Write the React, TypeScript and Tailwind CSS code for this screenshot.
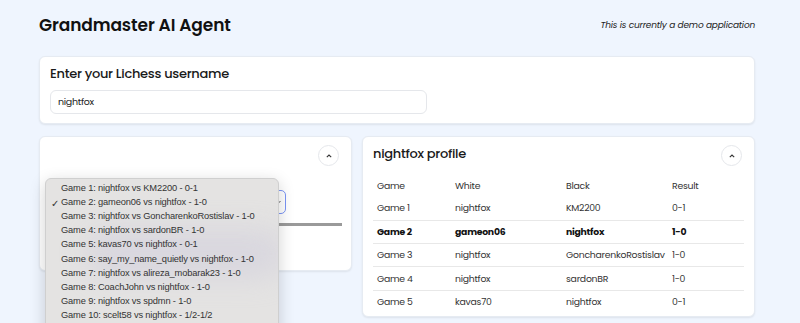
import React from "react";

const font = { fontFamily: "Poppins, 'Open Sans', 'Noto Sans', sans-serif" };

const games = [
  ["Game 1", "nightfox", "KM2200", "0-1"],
  ["Game 2", "gameon06", "nightfox", "1-0"],
  ["Game 3", "nightfox", "GoncharenkoRostislav", "1-0"],
  ["Game 4", "nightfox", "sardonBR", "1-0"],
  ["Game 5", "kavas70", "nightfox", "0-1"],
];

const menu = [
  "Game 1: nightfox vs KM2200 - 0-1",
  "Game 2: gameon06 vs nightfox - 1-0",
  "Game 3: nightfox vs GoncharenkoRostislav - 1-0",
  "Game 4: nightfox vs sardonBR - 1-0",
  "Game 5: kavas70 vs nightfox - 0-1",
  "Game 6: say_my_name_quietly vs nightfox - 1-0",
  "Game 7: nightfox vs alireza_mobarak23 - 1-0",
  "Game 8: CoachJohn vs nightfox - 1-0",
  "Game 9: nightfox vs spdmn - 1-0",
  "Game 10: scelt58 vs nightfox - 1/2-1/2",
];

function Chevron() {
  return (
    <div className="w-[21px] h-[21px] rounded-full border border-gray-200 bg-white flex items-center justify-center">
      <svg width="6" height="4" viewBox="0 0 6 4" fill="none">
        <path d="M0.8 3.2 L3 1 L5.2 3.2" stroke="#333" strokeWidth="1.1" />
      </svg>
    </div>
  );
}

export default function App() {
  return (
    <div className="w-[800px] h-[323px] overflow-hidden bg-[#eff5fe] text-[#1a1a1a]" style={font}>
      <div className="ml-[39px] w-[716px]">
        <div className="h-[51px] flex items-center justify-between">
          <h1 className="text-[17px] font-semibold tracking-[-0.1px] text-[#111]">Grandmaster AI Agent</h1>
          <span className="text-[9px] tracking-[-0.2px] italic text-[#222]">This is currently a demo application</span>
        </div>
        <div className="mt-[5px] h-[68px] bg-white rounded-[6px] shadow-[0_1px_2px_rgba(0,0,0,0.08)] border border-[#e6ebf2] px-[10px] pt-[8px]">
          <div className="text-[13px] tracking-[-0.3px] font-medium text-[#1a1a1a] leading-[18px]">Enter your Lichess username</div>
          <div className="mt-[7px] w-[377px] h-[24px] rounded-[6px] border border-[#e5e7eb] flex items-center px-[7px] text-[9.5px] tracking-[-0.3px] text-[#222]">
            nightfox
          </div>
        </div>
        <div className="mt-[12px] grid grid-cols-[313px_1fr] gap-[10px] items-start">
          <div className="relative h-[135px] bg-white rounded-[6px] border border-[#e6ebf2] shadow-[0_1px_2px_rgba(0,0,0,0.08)]">
            <div className="flex justify-end pt-[8px] pr-[12px]">
              <Chevron />
            </div>
            <div className="mt-[24px] ml-[10px] w-[236px] h-[24px] rounded-[5px] border-[1.5px] border-[#7b95f5] flex items-center justify-end pr-[4px]">
              <svg width="5" height="4" viewBox="0 0 5 4"><path d="M0.5 1 L2.5 3 L4.5 1" stroke="#555" strokeWidth="1" fill="none" /></svg>
            </div>
            <div className="mt-[9px] ml-[10px] w-[292px] h-[3px] bg-[#9a9a9a]" />
            <div
              className="absolute left-[5px] top-[41px] w-[234px] h-[160px] rounded-t-[6px] border border-[#cfcfcf] bg-[#e4e3e2] shadow-[0_4px_16px_rgba(0,0,0,0.18)] overflow-hidden"
              style={{ fontFamily: "'Liberation Sans', Arial, sans-serif" }}
            >
              <div className="absolute left-[40px] top-[50px] w-[200px] h-[50px] rounded-full bg-[#c9c6da] opacity-40 blur-[14px]" />
              <div className="relative pt-[3px]">
                {menu.map((m, i) => (
                  <div key={i} className="h-[14.1px] flex items-center whitespace-nowrap text-[9.3px] tracking-[-0.15px] text-[#333]">
                    <span className="w-[15px] text-right pr-[2px] text-[10px]">{i === 1 ? "✓" : ""}</span>
                    <span>{m}</span>
                  </div>
                ))}
              </div>
            </div>
          </div>
          <div className="h-[181px] bg-white rounded-[6px] border border-[#e6ebf2] shadow-[0_1px_2px_rgba(0,0,0,0.08)] px-[10px]">
            <div className="flex items-start justify-between pt-[8px] pr-[2px]">
              <div className="text-[13px] tracking-[-0.3px] font-medium leading-[18px] text-[#1a1a1a] pt-[0px]">nightfox profile</div>
              <Chevron />
            </div>
            <table className="mt-[9px] w-[371px] text-[9.3px] tracking-[-0.25px] text-[#333]">
              <thead>
                <tr className="h-[22px]">
                  <th className="font-normal text-left pl-[4px] w-[82px]">Game</th>
                  <th className="font-normal text-left w-[111px]">White</th>
                  <th className="font-normal text-left w-[106px]">Black</th>
                  <th className="font-normal text-left">Result</th>
                </tr>
              </thead>
              <tbody>
                {games.map((g, i) => (
                  <tr key={i} className={`h-[23.3px] ${i < games.length - 1 ? "border-b border-[#e8e8e8]" : ""} ${i === 1 ? "font-bold text-[#111]" : ""}`}>
                    <td className="pl-[4px]">{g[0]}</td>
                    <td>{g[1]}</td>
                    <td>{g[2]}</td>
                    <td>{g[3]}</td>
                  </tr>
                ))}
              </tbody>
            </table>
          </div>
        </div>
      </div>
    </div>
  );
}
